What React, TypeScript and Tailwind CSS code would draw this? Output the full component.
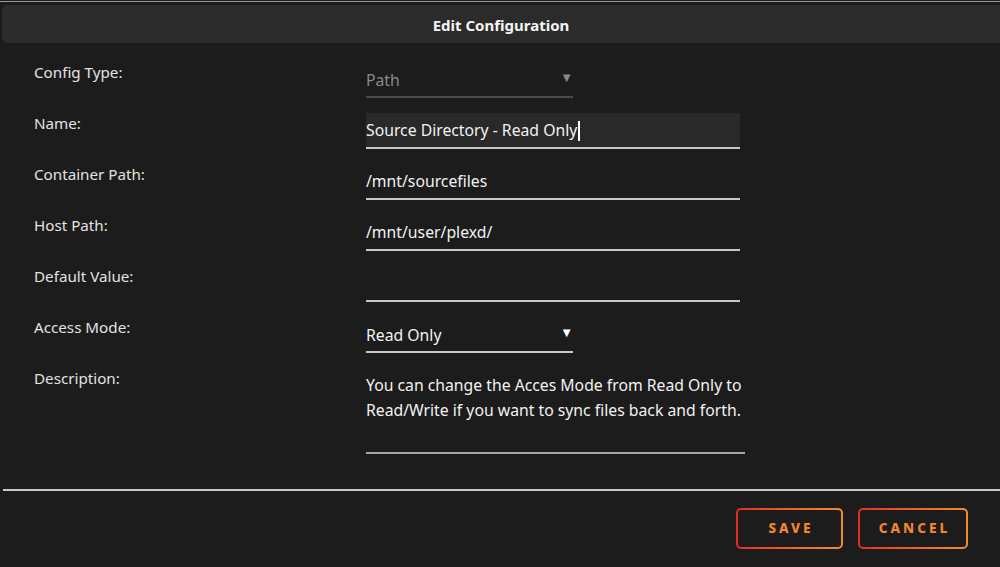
import React from "react";

const font = { fontFamily: '"Noto Sans", "Open Sans", sans-serif' };

type Field =
  | { kind: "select"; label: string; value: string; muted?: boolean }
  | { kind: "text"; label: string; value: string; focused?: boolean }
  | { kind: "area"; label: string; value: string };

const fields: Field[] = [
  { kind: "select", label: "Config Type:", value: "Path", muted: true },
  { kind: "text", label: "Name:", value: "Source Directory - Read Only", focused: true },
  { kind: "text", label: "Container Path:", value: "/mnt/sourcefiles" },
  { kind: "text", label: "Host Path:", value: "/mnt/user/plexd/" },
  { kind: "text", label: "Default Value:", value: "" },
  { kind: "select", label: "Access Mode:", value: "Read Only" },
  {
    kind: "area",
    label: "Description:",
    value: "You can change the Acces Mode from Read Only to Read/Write if you want to sync files back and forth.",
  },
];

function FieldControl({ f }: { f: Field }) {
  if (f.kind === "select") {
    return (
      <div
        className={`flex h-[36px] w-[207px] items-center justify-between border-b-2 text-[15.75px] ${
          f.muted ? "border-[#4a4a4a] text-[#8a8a8a]" : "border-[#c8c8c8] text-[#f2f2f2]"
        }`}
      >
        <span className="pt-[3px]">{f.value}</span>
        <span className={`-mt-[2px] text-[13px] ${f.muted ? "text-[#8a8a8a]" : "text-white"}`}>▼</span>
      </div>
    );
  }
  if (f.kind === "area") {
    return (
      <div className="h-[86px] w-[379px] border-b-2 border-[#a8a8a8] pt-[5px] text-[15.75px] leading-[25px] text-[#f2f2f2]">
        {f.value}
      </div>
    );
  }
  return (
    <div
      className={`flex h-[36px] w-[374px] items-center border-b-2 border-[#c8c8c8] pt-[2px] text-[15.75px] text-[#f2f2f2] ${
        f.focused ? "bg-[#292929]" : ""
      }`}
    >
      <span>{f.value}</span>
      {f.focused && <span className="ml-[1px] inline-block h-[20px] w-[1.5px] bg-white" />}
    </div>
  );
}

export default function App() {
  return (
    <div className="flex h-[567px] w-[1000px] flex-col bg-[#1c1c1c] text-[15px]" style={font}>
      <div className="mt-[1px] h-[1px] bg-[#9a9a9a]" />
      <div className="ml-[2px] mt-[3px] flex h-[38px] items-center justify-center rounded-l-[5px] bg-[#2b2b2b] pt-[2px]">
        <span className="text-[15px] font-bold text-[#f4f4f4]">Edit Configuration</span>
      </div>

      <div className="flex flex-col gap-[15px] pl-[34px] pt-[19px]">
        {fields.map((f) => (
          <div key={f.label} className="flex items-start">
            <div className="w-[332px] text-[15.2px] leading-[20px] text-[#e2e2e2]">{f.label}</div>
            <FieldControl f={f} />
          </div>
        ))}
      </div>

      <div className="ml-[3px] mt-auto h-[2px] bg-[#c8c8c8]" />
      <div className="flex h-[76px] items-start justify-end gap-[15px] pr-[32px] pt-[17px]">
        {["SAVE", "CANCEL"].map((b) => (
          <div
            key={b}
            className={`rounded-[5px] bg-gradient-to-r from-[#e32a25] to-[#f58a2c] p-[2px] ${
              b === "SAVE" ? "w-[107px]" : "w-[110px]"
            }`}
          >
            <div className="flex h-[37px] items-center justify-center rounded-[3px] bg-[#1c1c1c] pl-[3px] text-[13.5px] font-extrabold tracking-[3px] text-[#f2852f]">
              {b}
            </div>
          </div>
        ))}
      </div>
    </div>
  );
}
